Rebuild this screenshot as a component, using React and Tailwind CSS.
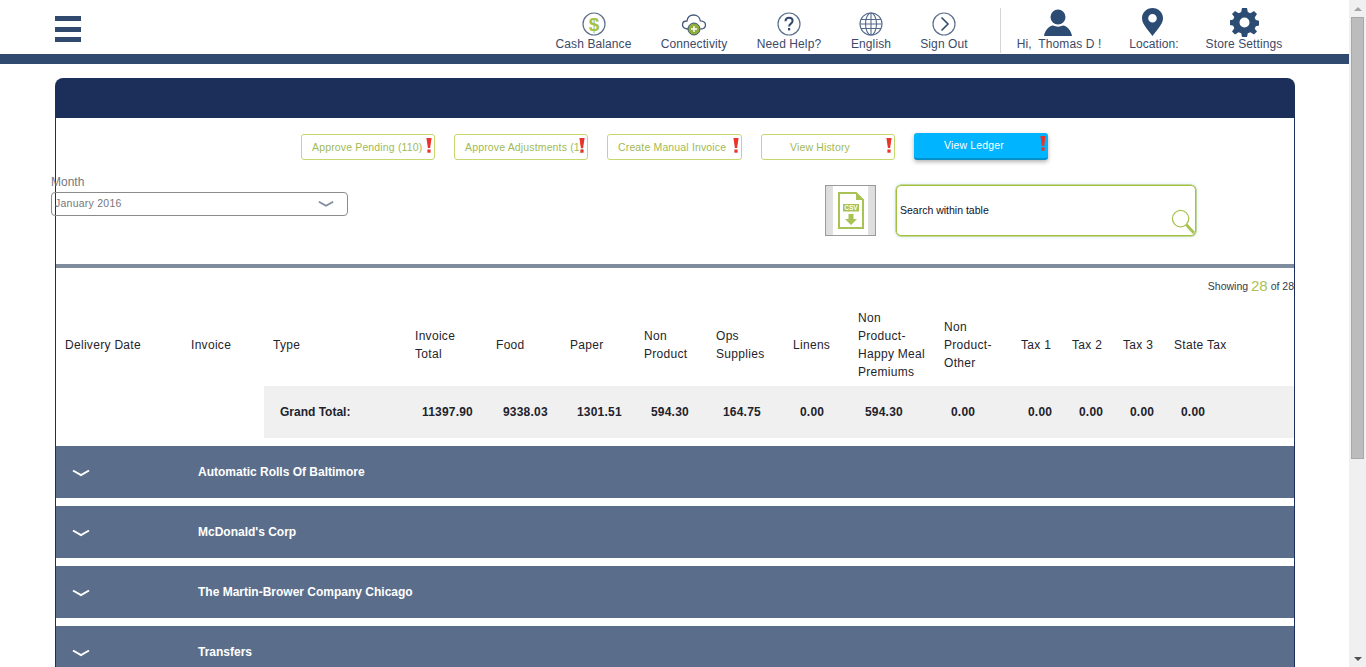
import React from 'react';

const sans = 'font-["Liberation_Sans",Arial,sans-serif]';

const HeaderItem = ({ icon, label, className = '' }) => (
    <div className={`flex flex-col items-center ${className}`}>
        <div className="h-[30px] flex items-center justify-center">{icon}</div>
        <span className="text-[12px] leading-[14px] -mt-[2px] text-[#3c4a68] tracking-[0.1px] whitespace-nowrap">{label}</span>
    </div>
);

const DollarIcon = () => (
    <svg width="24" height="24" viewBox="0 0 24 24">
        <circle cx="12" cy="12" r="11" fill="#fff" stroke="#5b6f8c" strokeWidth="1.2" />
        <text x="12" y="18.500" textAnchor="middle" fontSize="19" fontWeight="700" fill="#a4c243" fontFamily="Liberation Sans">$</text>
    </svg>
);

const CloudIcon = () => (
    <svg width="26" height="24" viewBox="0 0 26 24">
        <path d="M7 17c-3.500 0-5.500-2-5.500-4.200C1.500 10.500 3.500 9 6 9c.5-3.500 3-6 6.500-6 3.800 0 6.500 2.500 6.800 5.800 3 .2 5.200 1.800 5.200 4.200 0 2.400-2 4-5 4" fill="#fff" stroke="#44597a" strokeWidth="1.300" />
        <circle cx="13" cy="17" r="6" fill="#8fae3c" stroke="#3d5170" strokeWidth="1" />
        <path d="M13 14v6M10 17h6" stroke="#fff" strokeWidth="1.400" />
    </svg>
);

const HelpIcon = () => (
    <svg width="24" height="24" viewBox="0 0 24 24">
        <circle cx="12" cy="12" r="11" fill="#fff" stroke="#5b6f8c" strokeWidth="1.200" />
        <path d="M8.500 9.300c0-2.200 1.600-3.500 3.600-3.500s3.500 1.300 3.500 3.200c0 2.600-3.500 2.700-3.500 5.500" fill="none" stroke="#33496d" strokeWidth="2" />
        <rect x="11" y="16" width="2.200" height="2.400" fill="#33496d" />
    </svg>
);

const GlobeIcon = () => (
    <svg width="24" height="24" viewBox="0 0 24 24" fill="none" stroke="#54698a" strokeWidth="1.100">
        <circle cx="12" cy="12" r="11" />
        <ellipse cx="12" cy="12" rx="5.500" ry="11" />
        <path d="M12 1v22M2 7.500h20M1 12h22M2 16.500h20" />
    </svg>
);

const SignOutIcon = () => (
    <svg width="24" height="24" viewBox="0 0 24 24" fill="none">
        <circle cx="12" cy="12" r="11" stroke="#5b6f8c" strokeWidth="1.200" />
        <path d="M9.500 5.500 16 12l-6.500 6.500" stroke="#33496d" strokeWidth="1.600" />
    </svg>
);

const UserIcon = () => (
    <svg width="28" height="27" viewBox="0 0 28 27" fill="#2d4c73" className="mb-[4px] mr-[2px]">
        <circle cx="14" cy="8" r="7.500" />
        <path d="M0 27c1-6 5-10 9-10.500 3 1.500 7 1.500 10 0 4 .5 8 4.500 9 10.500z" />
    </svg>
);

const PinIcon = () => (
    <svg width="21" height="28" viewBox="0 0 21 28" className="mb-[4px] mr-[3px]">
        <path fillRule="evenodd" d="M10.500 0C4.700 0 0 4.500 0 10.200 0 16 6 22 10.500 28 15 22 21 16 21 10.200 21 4.500 16.300 0 10.500 0zm0 6a4.300 4.300 0 1 1 0 8.600 4.300 4.300 0 0 1 0-8.600z" fill="#2d4c73" />
    </svg>
);

const GearIcon = () => (
    <svg width="29" height="29" viewBox="0 0 29 29" fill="#2d4c73" className="mb-[4px]">
        <path fillRule="evenodd" d="M12 0h5l.8 4.100 2.600 1.100L24 2.900 27 6l-2.300 3.500 1.100 2.600 3.200.7v4.600l-3.200.8-1.100 2.600L27 23.500l-3 3-3.600-2.300-2.600 1.100L17 29h-5l-.8-3.700-2.600-1.100L5 26.500l-3-3 2.300-3.200-1.100-2.600-3.200-.8v-4.600l3.200-.7 1.100-2.600L2 6l3-3.100 3.600 2.300 2.600-1.100zm2.500 9.500a5 5 0 1 0 0 10 5 5 0 0 0 0-10z" />
    </svg>
);

const Bang = () => (
    <svg width="6" height="15" viewBox="0 0 6 15" className="absolute right-[2px] top-[3px]" fill="#e8342c">
        <path d="M.4 0h5.200L4.100 10H1.900z" />
        <rect x="1.400" y="11.500" width="3.200" height="3.200" />
    </svg>
);

const OutlineButton = ({ label, className = '' }) => (
    <div className={`relative h-[26px] pt-px border border-[#c5d86d] rounded-[3px] text-[10.5px] tracking-[0.15px] text-[#9fba55] flex items-center overflow-hidden whitespace-nowrap ${className}`}>
        {label}
        <Bang />
    </div>
);

const Chevron = ({ color = '#fff', width = 18 }) => (
    <svg width={width} height="8" viewBox="0 0 18 8" fill="none">
        <path d="M1 1.500 9 6l8-4.500" stroke={color} strokeWidth="2" />
    </svg>
);

const colsClass = 'grid grid-cols-[126px_82px_142px_81px_74px_74px_72px_77px_65px_86px_77px_51px_51px_51px_129px]';
const totalsClass = 'grid grid-cols-[142px_81px_74px_74px_72px_77px_65px_86px_77px_51px_51px_51px_1fr]';

const headings = ['Delivery Date', 'Invoice', 'Type', 'Invoice\nTotal', 'Food', 'Paper', 'Non\nProduct', 'Ops\nSupplies', 'Linens', 'Non\nProduct-\nHappy Meal\nPremiums', 'Non\nProduct-\nOther', 'Tax 1', 'Tax 2', 'Tax 3', 'State Tax'];
const totals = ['11397.90', '9338.03', '1301.51', '594.30', '164.75', '0.00', '594.30', '0.00', '0.00', '0.00', '0.00', '0.00'];
const vendors = ['Automatic Rolls Of Baltimore', "McDonald's Corp", 'The Martin-Brower Company Chicago', 'Transfers'];

export default function App() {
    return (
        <div className={`${sans} h-[667px] overflow-hidden flex bg-white`}>
            <div className="w-[1349px] shrink-0">
                <header className="h-[54px] flex">
                    <div className="w-[555px] pl-[55px] pt-[16px] shrink-0">
                        <div className="w-[26px] h-[26px] flex flex-col justify-between">
                            <div className="h-[5px] bg-[#2f4a6e]" />
                            <div className="h-[5px] bg-[#2f4a6e]" />
                            <div className="h-[5px] bg-[#2f4a6e]" />
                        </div>
                    </div>
                    <div className="flex pt-[9px]">
                        <HeaderItem icon={<DollarIcon />} label="Cash Balance" className="w-[77px]" />
                        <HeaderItem icon={<CloudIcon />} label="Connectivity" className="w-[68px] ml-[28px]" />
                        <HeaderItem icon={<HelpIcon />} label="Need Help?" className="w-[66px] ml-[28px]" />
                        <HeaderItem icon={<GlobeIcon />} label="English" className="w-[40px] ml-[29px]" />
                        <HeaderItem icon={<SignOutIcon />} label="Sign Out" className="w-[48px] ml-[29px]" />
                        <div className="w-px h-[45px] -mt-px bg-[#d5d5d5] ml-[32px]" />
                        <HeaderItem icon={<UserIcon />} label={'Hi,\u00a0 Thomas D !'} className="w-[84px] ml-[16px]" />
                        <HeaderItem icon={<PinIcon />} label="Location:" className="w-[50px] ml-[28px]" />
                        <HeaderItem icon={<GearIcon />} label="Store Settings" className="w-[76px] ml-[27px]" />
                    </div>
                </header>
                <div className="h-[10px] bg-[#2f4a6e]" />

                <main className="mt-[14px] ml-[55px] w-[1240px]">
                    <div className="h-[40px] bg-[#1c2f5a] rounded-t-[8px]" />
                    <div className="border-x border-[#1c2f5a] h-[600px]">
                        <div className="h-[150px] border-b-4 border-[#7f8c9d]">
                            <div className="flex pt-[16px] pl-[245px] gap-[19px] items-start">
                                <OutlineButton label="Approve Pending (110)" className="w-[134px] pl-[10px]" />
                                <OutlineButton label="Approve Adjustments (1)" className="w-[134px] pl-[10px]" />
                                <OutlineButton label="Create Manual Invoice" className="w-[135px] pl-[10px]" />
                                <OutlineButton label="View History" className="w-[134px] justify-center pr-[16px]" />
                                <div className="relative w-[134px] h-[27px] -mt-px pt-px rounded-[3px] bg-[#00b4ff] border-b-2 border-[#0690c9] shadow-[0_2px_4px_rgba(0,0,0,0.3)] text-[10.5px] tracking-[0.15px] text-white flex items-center justify-center pr-[14px]">
                                    View Ledger
                                    <Bang />
                                </div>
                            </div>
                            <div className="flex mt-[8px]">
                                <div className="w-[297px] -ml-[5px] mt-[7px]">
                                    <div className="text-[12px] leading-[14px] text-[#77777c]">Month</div>
                                    <div className="mt-[3px] h-[24px] border border-[#8b8b8b] rounded-[4px] flex items-center justify-between pl-[3px] pr-[13px] text-[10.5px] tracking-[0.25px] text-[#77777c]">
                                        January 2016
                                        <Chevron color="#7f8c9d" width={16} />
                                    </div>
                                </div>
                                <div className="ml-[477px] mt-[17px] w-[51px] h-[51px] border border-[#9a9a9a] bg-gradient-to-r from-[#dcdcdc] via-[#eeeeee] to-[#dcdcdc] flex items-center justify-center">
                                    <div className="w-[35px] h-[49px] bg-white flex items-center justify-center">
                                        <svg width="26" height="37" viewBox="0 0 26 37">
                                            <path d="M1 1h17l7 7v28H1z" fill="#fff" stroke="#a9c255" strokeWidth="2" />
                                            <path d="M18 1v7h7z" fill="#a9c255" />
                                            <rect x="5" y="12" width="16" height="7.500" fill="#a9c255" />
                                            <text x="13" y="18" textAnchor="middle" fontSize="6.500" fontWeight="700" fill="#fff" fontFamily="Liberation Sans">CSV</text>
                                            <path d="M10.500 22h5v5h3.500l-6 6-6-6h3.500z" fill="#a9c255" />
                                        </svg>
                                    </div>
                                </div>
                                <div className="ml-[20px] mt-[17px] relative w-[300px] h-[51px] border border-[#a3c040] rounded-[5px] shadow-[0_0_0_0.5px_#a3c040,0_0_4px_rgba(120,180,230,0.4)] flex items-center pl-[3px] text-[10.5px] text-[#111126]">
                                    Search within table
                                    <svg width="24" height="25" viewBox="0 0 25 26" className="absolute right-0 bottom-px" fill="none" stroke="#a7c24f">
                                        <circle cx="10" cy="10" r="8.500" strokeWidth="1.300" />
                                        <path d="M16 16.500 24 25" strokeWidth="3" />
                                    </svg>
                                </div>
                            </div>
                        </div>

                        <div className="h-[34px] flex justify-end items-center pt-[8px] pb-[5px] text-[10.5px] text-[#333a4a] whitespace-nowrap">
                            Showing&nbsp;<span className="text-[15px] text-[#a9c255]">28</span>&nbsp;of 28
                        </div>
                        <div className={`${colsClass} h-[84px] pt-px items-center text-[12px] leading-[18px] tracking-[0.3px] text-[#24242c]`}>
                            {headings.map((h) => (
                                <div key={h} className="pl-[9px] whitespace-pre">{h}</div>
                            ))}
                        </div>
                        <div className="flex">
                            <div className="w-[208px] shrink-0" />
                            <div className={`${totalsClass} flex-1 h-[52px] items-center bg-[#f0f0f0] text-[12px] font-bold text-[#22222c]`}>
                                <div className="pl-[16px]">Grand Total:</div>
                                {totals.map((t, i) => (
                                    <div key={i} className="pl-[16px] tracking-[0.2px]">{t}</div>
                                ))}
                            </div>
                        </div>
                        <div className="mt-[8px] flex flex-col gap-[8px]">
                            {vendors.map((v) => (
                                <div key={v} className="h-[52px] shrink-0 bg-[#5a6e8c] flex items-center text-[12px] font-bold text-white">
                                    <div className="w-[142px] pl-[16px] pt-[1px]"><Chevron /></div>
                                    {v}
                                </div>
                            ))}
                        </div>
                    </div>
                </main>
            </div>

            <aside className="w-[17px] shrink-0 bg-[#f0f0f0] flex flex-col items-center">
                <div className="h-[17px] shrink-0 flex items-center justify-center">
                    <div className="w-0 h-0 border-x-[4px] border-x-transparent border-b-[4px] border-b-[#a3a3a3]" />
                </div>
                <div className="w-[13px] h-[442px] bg-[#bcbcbc] border border-[#a8a8a8]" />
                <div className="mt-auto h-[17px] shrink-0 flex items-center justify-center">
                    <div className="w-0 h-0 border-x-[4px] border-x-transparent border-t-[4px] border-t-[#505050]" />
                </div>
            </aside>
        </div>
    );
}
